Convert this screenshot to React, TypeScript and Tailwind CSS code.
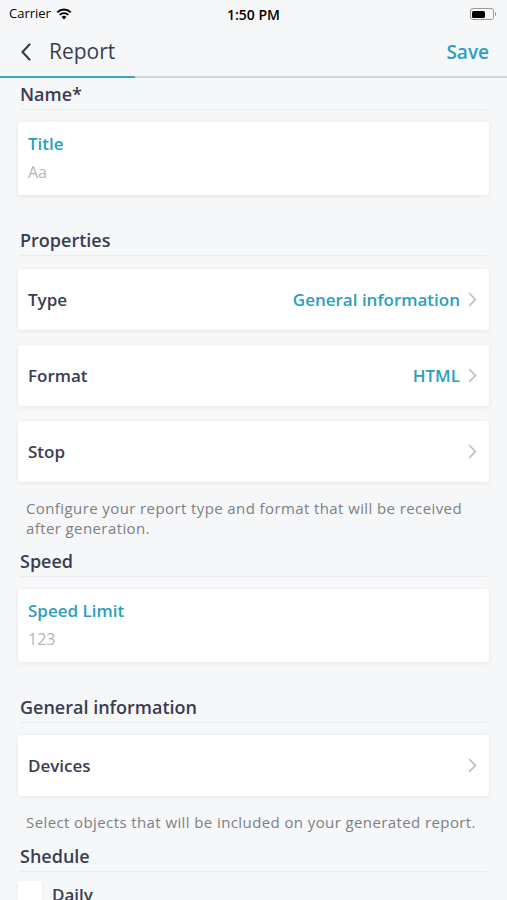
import React from 'react';

const teal = 'text-[#2a9fbe]';

function SectionTitle({ children, top }: { children: React.ReactNode; top: string }) {
  return (
    <div className={`mx-5 ${top} border-b border-[#e8eaee] pb-[3px]`}>
      <div className="text-[18px] leading-6 font-semibold text-[#3a3c52]">{children}</div>
    </div>
  );
}

function Chevron() {
  return (
    <svg width="9" height="15" viewBox="0 0 9 15" className="ml-2">
      <path d="M1.5 1.5 L7.5 7.5 L1.5 13.5" fill="none" stroke="#b9bcc2" strokeWidth="1.6" strokeLinecap="round" strokeLinejoin="round" />
    </svg>
  );
}

function Row({ label, value }: { label: string; value?: string }) {
  return (
    <div className="mx-[18px] h-[61px] bg-white rounded-[3px] shadow-[0_1px_5px_rgba(0,0,0,0.07)] flex items-center px-[10px]">
      <div className="text-[17px] font-semibold text-[#3a3c52] flex-1">{label}</div>
      {value && <div className={`text-[17px] font-semibold ${teal}`}>{value}</div>}
      <div className="mr-[2px]">
        <Chevron />
      </div>
    </div>
  );
}

function InputCard({ label, placeholder, top }: { label: string; placeholder: string; top: string }) {
  return (
    <div className={`mx-[18px] ${top} bg-white rounded-[3px] shadow-[0_1px_5px_rgba(0,0,0,0.07)] px-[10px] pt-[12px] pb-[13px] flex flex-col gap-2`}>
      <div className={`text-[17px] leading-5 font-semibold ${teal}`}>{label}</div>
      <div className="text-[16px] leading-5 text-[#b3b5ba]">{placeholder}</div>
    </div>
  );
}

export default function App() {
  return (
    <div className="w-[507px] h-[900px] overflow-hidden bg-[#f6f7f9]" style={{ fontFamily: '"Open Sans", "Noto Sans", sans-serif' }}>
      {/* status bar */}
      <div className="h-[28px] flex items-center px-[9px] relative">
        <div className="flex items-center gap-[5px] text-[13px] text-black">
          <span>Carrier</span>
          <svg width="16" height="12" viewBox="0 0 16 12">
            <path d="M8 11.5 L5.6 8.9 A3.4 3.4 0 0 1 10.4 8.9 Z" fill="#000" />
            <path d="M3.6 6.9 A6.3 6.3 0 0 1 12.4 6.9" fill="none" stroke="#000" strokeWidth="1.8" />
            <path d="M1.2 4.3 A9.6 9.6 0 0 1 14.8 4.3" fill="none" stroke="#000" strokeWidth="1.8" />
          </svg>
        </div>
        <div className="absolute left-0 right-0 text-center text-[14px] font-semibold text-black pointer-events-none">1:50 PM</div>
        <div className="ml-auto mr-[2px] flex items-center">
          <div className="w-[24px] h-[12px] rounded-[3px] border border-[#9a9a9a] p-[1.5px]">
            <div className="w-[13px] h-full bg-black rounded-[1.5px]" />
          </div>
          <div className="w-[1.5px] h-[4px] bg-[#9a9a9a] ml-[1px] rounded-r" />
        </div>
      </div>

      {/* nav bar */}
      <div className="h-[48px] flex items-center pl-[20px] pr-[18px]">
        <svg width="12" height="18" viewBox="0 0 12 18">
          <path d="M9.5 1.5 L2.5 9 L9.5 16.5" fill="none" stroke="#3a3c52" strokeWidth="2.2" strokeLinecap="round" strokeLinejoin="round" />
        </svg>
        <div className="ml-[17px] text-[21px] font-medium text-[#3a3c52]">Report</div>
        <div className={`ml-auto text-[19px] font-semibold ${teal}`}>Save</div>
      </div>
      <div className="flex h-[2px]">
        <div className="w-[135px] bg-[#3aa5c6]" />
        <div className="flex-1 bg-[#d3d5d9]" />
      </div>

      <SectionTitle top="mt-[4px]">Name*</SectionTitle>
      <InputCard label="Title" placeholder="Aa" top="mt-[12px]" />

      <SectionTitle top="mt-[33px]">Properties</SectionTitle>
      <div className="mt-[13px] flex flex-col gap-[15px]">
        <Row label="Type" value="General information" />
        <Row label="Format" value="HTML" />
        <Row label="Stop" />
      </div>
      <div className="mx-[26px] mt-[16px] text-[15px] leading-5 tracking-[0.4px] text-[#7d7f85]">
        Configure your report type and format that will be received after generation.
      </div>

      <SectionTitle top="mt-[11px]">Speed</SectionTitle>
      <InputCard label="Speed Limit" placeholder="123" top="mt-[12px]" />

      <SectionTitle top="mt-[33px]">General information</SectionTitle>
      <div className="mt-[12px]">
        <Row label="Devices" />
      </div>
      <div className="mx-[26px] mt-[16px] text-[15px] leading-5 tracking-[0.4px] text-[#7d7f85]">
        Select objects that will be included on your generated report.
      </div>

      <SectionTitle top="mt-[12px]">Shedule</SectionTitle>
      <div className="mx-[18px] mt-[9px] flex items-start gap-[10px]">
        <div className="w-[24px] h-[24px] bg-white rounded-[2px] shadow-[0_1px_3px_rgba(0,0,0,0.08)]" />
        <div className="text-[17px] leading-6 font-semibold text-[#3a3c52] mt-[2px]">Daily</div>
      </div>
    </div>
  );
}
